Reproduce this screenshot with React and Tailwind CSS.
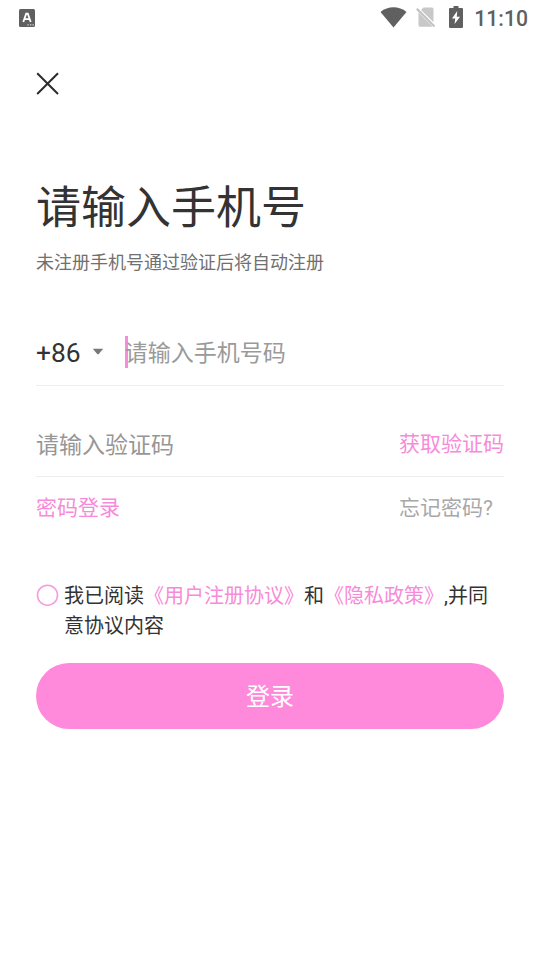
function StatusBar() {
  return (
    <header className="flex h-9 items-center justify-between pl-[19px] pr-3 text-[#5f5f5f]">
      <svg width="16" height="18" viewBox="0 0 16 18" className="block">
        <rect width="16" height="18" rx="1.5" fill="#606060" />
        <path d="M4.300 13 7.200 4.600h1.600L11.700 13M5.700 10.200h4.600" fill="none" stroke="#fff" strokeWidth="1.800" />
        <path d="M8.400 15.900h1.300M11 15.900h1.300M13.500 15.900h1.300" stroke="#ddd" strokeWidth="1.300" />
      </svg>
      <div className="flex items-center">
        <div className="flex items-center pb-[2px]">
          <svg width="27" height="21" viewBox="0 0 27 21" className="mr-[9px] block">
            <path d="M.5 5C8-1.200 19-1.200 26.500 5L13.500 20.500Z" fill="#606060" />
          </svg>
          <svg width="20" height="20" viewBox="0 0 20 20" className="mr-[13px] block">
            <path d="M7.500.500H16q1.500 0 1.500 1.500V15.300L5 3ZM2.500 5.500 16.300 19.300q-.4.500-1.300.5H4q-1.500 0-1.500-1.500Z" fill="#c8c8c8" />
            <path d="M.8 1.800 18.500 19.500" stroke="#c0c0c0" strokeWidth="2" />
          </svg>
          <svg width="14" height="22" viewBox="0 0 14 22" className="mr-[11px] block">
            <path d="M4.500 0h5v2H13q1 0 1 1v18q0 1-1 1H1q-1 0-1-1V3q0-1 1-1h3.500Z" fill="#606060" />
            <path d="M8.200 5 3 12.600h3.200L5.600 18 11 10.800H7.800Z" fill="#fff" />
          </svg>
        </div>
        <span className="pt-[2px] text-[21.2px] font-medium leading-6">11:10</span>
      </div>
    </header>
  );
}

export default function App() {
  return (
    <main className="h-[960px] w-[540px] overflow-hidden bg-white font-['Roboto','Noto_Sans_CJK_SC',sans-serif] text-[#333333]">
      <StatusBar />
      <div className="px-9">
        <button aria-label="关闭" className="mt-9 block h-6 w-6">
          <svg width="24" height="24" viewBox="0 0 24 24" className="block">
            <path d="M1.200 1.200 22 22M22 1.200 1.200 22" stroke="#2c2c2c" strokeWidth="2" fill="none" />
          </svg>
        </button>

        <h1 className="mt-20 h-[66px] text-[45px] leading-[66px]">请输入手机号</h1>
        <p className="mt-[7px] h-7 text-lg leading-7 text-[#707070]">未注册手机号通过验证后将自动注册</p>

        <div className="mt-[42px] flex h-[67px] items-center border-b border-[#eeeeee]">
          <span className="pt-px text-[26.4px] leading-8">+86</span>
          <svg width="12" height="8" viewBox="0 0 12 8" className="ml-[11px] block">
            <path d="M.8.700h10.400L7 5.700q-1 1-2 0Z" fill="#777" />
          </svg>
          <span className="ml-[21px] h-8 w-[3px] bg-[#f58dd8]" />
          <span className="-ml-[3px] pt-1 text-[23px] leading-8 text-[#9a9a9a]">请输入手机号码</span>
        </div>

        <div className="mt-[25px] flex h-[66px] items-center justify-between border-b border-[#eeeeee]">
          <span className="pt-1 text-[23px] leading-8 text-[#969696]">请输入验证码</span>
          <button className="text-[21px] leading-8 text-[#f78bd9]">获取验证码</button>
        </div>

        <div className="mt-[15px] flex h-8 items-center justify-between text-[21px] leading-8">
          <a className="text-[#f78bd9]">密码登录</a>
          <a className="pr-[11px] text-[#a8a8a8]">忘记密码?</a>
        </div>

        <div className="mt-[57px] flex gap-[5px]">
          <svg width="23" height="22" viewBox="0 0 23 22" className="mt-[3px] block shrink-0">
            <circle cx="11.500" cy="11.200" r="10" fill="none" stroke="#f79bdf" strokeWidth="1.600" />
          </svg>
          <p className="w-[430px] text-xl leading-[30px]">
            我已阅读<span className="text-[#f78bd9]">《用户注册协议》</span>和<span className="text-[#f78bd9]">《隐私政策》</span>,并同<br />意协议内容
          </p>
        </div>

        <button className="mt-[22px] flex h-[66px] w-full items-center justify-center rounded-full bg-[#ff8adc] pt-[2px] text-2xl text-white">
          登录
        </button>
      </div>
    </main>
  );
}
